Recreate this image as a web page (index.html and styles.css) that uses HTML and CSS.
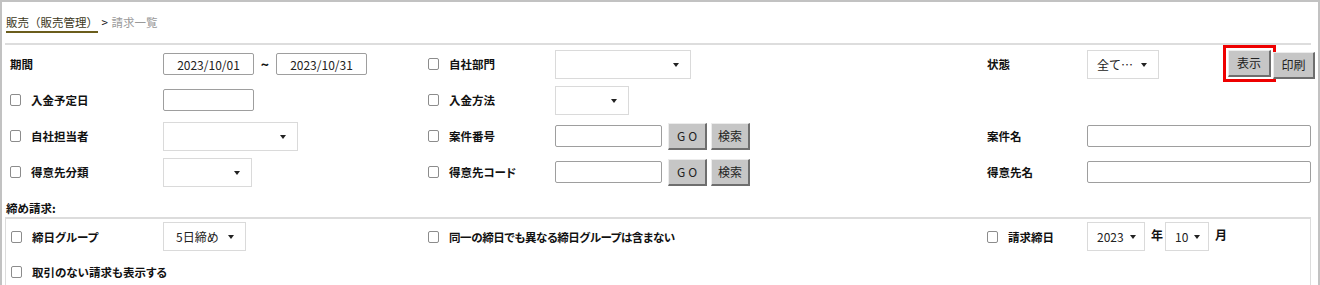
FILE: index.html
```html
<!DOCTYPE html>
<html lang="ja">
<head>
    <meta charset="UTF-8">
    <title>請求一覧</title>
    <link rel="stylesheet" href="styles.css">
</head>
<body>
    <div class="frame">
        <div class="crumb">
            <a href="#" class="crumb-link">販売（販売管理）</a>
            <span class="crumb-sep">&gt;</span>
            <span class="crumb-cur">請求一覧</span>
        </div>
        <div class="rule"></div>

        <div class="grid">
            <!-- row 1 -->
            <div class="lbl">期間</div>
            <div class="fld">
                <input type="text" class="txt date" value="2023/10/01">
                <span class="tilde">~</span>
                <input type="text" class="txt date" value="2023/10/31">
            </div>
            <div class="lbl"><span class="cb"></span>自社部門</div>
            <div class="fld"><div class="sel" style="width:136px"></div></div>
            <div class="lbl">状態</div>
            <div class="fld">
                <div class="sel" style="width:72px">全て…</div>
                <div class="actions">
                    <button class="btn btn-show">表示</button>
                    <button class="btn btn-print">印刷</button>
                </div>
            </div>

            <!-- row 2 -->
            <div class="lbl"><span class="cb"></span>入金予定日</div>
            <div class="fld"><input type="text" class="txt date"></div>
            <div class="lbl"><span class="cb"></span>入金方法</div>
            <div class="fld"><div class="sel" style="width:74px"></div></div>
            <div></div>
            <div></div>

            <!-- row 3 -->
            <div class="lbl"><span class="cb"></span>自社担当者</div>
            <div class="fld"><div class="sel" style="width:135px"></div></div>
            <div class="lbl"><span class="cb"></span>案件番号</div>
            <div class="fld">
                <input type="text" class="txt code">
                <button class="btn btn-go">GO</button>
                <button class="btn btn-find">検索</button>
            </div>
            <div class="lbl">案件名</div>
            <div class="fld"><input type="text" class="txt wide"></div>

            <!-- row 4 -->
            <div class="lbl"><span class="cb"></span>得意先分類</div>
            <div class="fld"><div class="sel" style="width:89px"></div></div>
            <div class="lbl"><span class="cb"></span>得意先コード</div>
            <div class="fld">
                <input type="text" class="txt code">
                <button class="btn btn-go">GO</button>
                <button class="btn btn-find">検索</button>
            </div>
            <div class="lbl">得意先名</div>
            <div class="fld"><input type="text" class="txt wide"></div>
        </div>

        <div class="gtitle">締め請求:</div>
        <div class="grid group">
            <div class="lbl"><span class="cb"></span>締日グループ</div>
            <div class="fld"><div class="sel sel-close" style="width:83px">5日締め</div></div>
            <div class="lbl span2 tight"><span class="cb"></span>同一の締日でも異なる締日グループは含まない</div>
            <div class="lbl"><span class="cb"></span>請求締日</div>
            <div class="fld">
                <div class="sel sel-small" style="width:58px">2023</div>
                <span class="unit">年</span>
                <div class="sel sel-small" style="width:44px">10</div>
                <span class="unit">月</span>
            </div>

            <div class="lbl span2"><span class="cb"></span>取引のない請求も表示する</div>
        </div>
    </div>
</body>
</html>
```

FILE: styles.css
```css
body {
    margin: 0;
    font-family: "Noto Sans CJK JP", "Noto Sans", sans-serif;
    font-size: 12px;
    color: #111;
    background: #fff;
}
.frame {
    width: 1320px;
    height: 285px;
    box-sizing: border-box;
    border: 2px solid #c2c2c2;
    border-bottom: none;
    padding: 0 7px 0 3px;
    overflow: hidden;
}
.crumb {
    padding: 10px 0 0 1px;
    line-height: 20px;
    height: 20px;
    white-space: nowrap;
    font-size: 11.5px;
}
.crumb-link {
    color: #3d3822;
    text-decoration: underline;
    text-decoration-color: #6b5d1c;
    text-decoration-thickness: 1.5px;
    text-underline-offset: 4px;
}
.crumb-sep {
    color: #111;
    margin: 0 1px;
}
.crumb-cur {
    color: #9a9a9a;
}
.rule {
    height: 2px;
    background: #dddddd;
    margin-top: 11px;
}
.grid {
    display: grid;
    grid-template-columns: 158px 260px 132px 427px 105px 1fr;
    grid-auto-rows: 36px;
    align-items: center;
    margin-top: 1px;
}
.lbl {
    display: flex;
    align-items: center;
    padding-left: 5px;
    font-weight: bold;
    font-size: 11.5px;
    white-space: nowrap;
    font-feature-settings: "palt";
}
.tight {
    letter-spacing: -0.4px;
}
.span2 {
    grid-column: span 2;
}
.cb {
    width: 11px;
    height: 12px;
    box-sizing: border-box;
    border: 1px solid #8c8c8c;
    border-radius: 2px;
    background: #fff;
    margin-right: 10px;
    flex: none;
}
.fld {
    display: flex;
    align-items: center;
    white-space: nowrap;
}
.txt {
    height: 22px;
    box-sizing: border-box;
    border: 1px solid #9e9e9e;
    border-radius: 2px;
    padding: 0 4px;
    font-family: inherit;
    font-size: 12px;
    color: #222;
    background: #fff;
}
.date {
    width: 91px;
    text-align: center;
}
.code {
    width: 107px;
}
.wide {
    width: 224px;
}
.tilde {
    width: 22px;
    text-align: center;
    font-weight: bold;
    font-size: 14px;
}
.sel {
    position: relative;
    height: 29px;
    box-sizing: border-box;
    border: 1px solid #dadada;
    background: #fff;
    display: flex;
    align-items: center;
    padding-left: 9px;
    color: #222;
}
.sel::after {
    content: "";
    position: absolute;
    right: 11px;
    top: 12px;
    border-left: 3px solid transparent;
    border-right: 3px solid transparent;
    border-top: 4px solid #222;
}
.sel-small::after {
    right: 8px;
}
.sel-close {
    padding-left: 12px;
}
.unit {
    font-weight: bold;
    margin: 0 2px 4px 6px;
}
.btn {
    height: 27px;
    box-sizing: border-box;
    padding: 0;
    background: #c6c6c6;
    border: 1px solid #ececec;
    border-right: 2px solid #6e6e6e;
    border-bottom: 2px solid #6e6e6e;
    font-family: inherit;
    font-size: 12px;
    color: #222;
    cursor: pointer;
}
.btn-go {
    width: 39px;
    margin-left: 6px;
    letter-spacing: 3px;
    text-indent: 3px;
}
.btn-find {
    width: 39px;
    margin-left: 4px;
}
.actions {
    display: flex;
    gap: 2px;
    margin-left: 69px;
}
.btn-show {
    width: 43px;
    outline: 3px solid #ee0000;
    outline-offset: 2px;
}
.btn-print {
    width: 42px;
    margin-top: 2px;
}
.gtitle {
    font-weight: bold;
    font-size: 11.5px;
    line-height: 18px;
    margin-top: 9px;
    padding-left: 1px;
}
.group {
    margin-top: 0;
    border: 1px solid #dcdcdc;
    border-top: 2px solid #dcdcdc;
    border-bottom: none;
    grid-template-columns: 157px 260px 132px 427px 105px 1fr;
    grid-auto-rows: 35px;
    height: 80px;
}
```
